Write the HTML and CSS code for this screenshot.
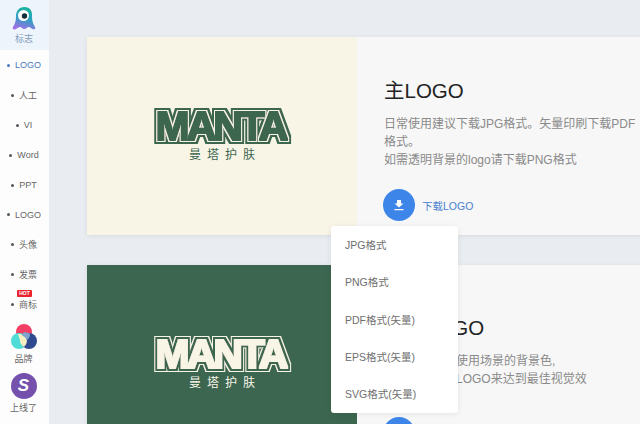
FILE: index.html
```html
<!DOCTYPE html>
<html lang="en">
<head>
    <meta charset="UTF-8">
    <title>Manta</title>
    <link rel="stylesheet" href="styles.css">
</head>
<body>
    <!-- blocky outline round the wordmark, one filter per card colour -->
    <svg class="filter-defs" width="0" height="0">
        <filter id="outline-light" x="-10%" y="-30%" width="120%" height="160%">
            <feMorphology in="SourceAlpha" operator="dilate" radius="3.5" result="a"/>
            <feFlood flood-color="#3c6650"/>
            <feComposite in2="a" operator="in" result="edge"/>
            <feMorphology in="SourceAlpha" operator="dilate" radius="2.3" result="b"/>
            <feFlood flood-color="#f8f5e7"/>
            <feComposite in2="b" operator="in" result="ring"/>
            <feMorphology in="SourceGraphic" operator="dilate" radius="0.8" result="fill"/>
            <feMerge>
                <feMergeNode in="edge"/>
                <feMergeNode in="ring"/>
                <feMergeNode in="fill"/>
            </feMerge>
        </filter>
        <filter id="outline-dark" x="-10%" y="-30%" width="120%" height="160%">
            <feMorphology in="SourceAlpha" operator="dilate" radius="3.5" result="a"/>
            <feFlood flood-color="#f8f5e7"/>
            <feComposite in2="a" operator="in" result="edge"/>
            <feMorphology in="SourceAlpha" operator="dilate" radius="2.6" result="b"/>
            <feFlood flood-color="#3c6650"/>
            <feComposite in2="b" operator="in" result="ring"/>
            <feMorphology in="SourceGraphic" operator="dilate" radius="0.8" result="fill"/>
            <feMerge>
                <feMergeNode in="edge"/>
                <feMergeNode in="ring"/>
                <feMergeNode in="fill"/>
            </feMerge>
        </filter>
    </svg>

    <div class="sidebar">
        <div class="side-head">
            <svg class="mascot" width="24" height="25" viewBox="0 0 24 25">
                <defs>
                    <linearGradient id="mascot-fill" x1="0.6" y1="0" x2="0.3" y2="1">
                        <stop offset="0" stop-color="#17b59c"/>
                        <stop offset="0.5" stop-color="#2f9fc4"/>
                        <stop offset="1" stop-color="#a76be8"/>
                    </linearGradient>
                </defs>
                <path d="M12.500 0C7 0 4 4 4 9.500c0 4.500-1 7.500-3 10.500-1 1.500.5 3 2.500 2.200 2-.7 3-2.200 4.500-2.200 1.500 0 2.200 2 4.200 2s3-2 4.500-2c1.400 0 2.400 1.500 4.300 2.200 1.700.600 2.800-.800 2-2.200-2-3-3-6-3-10.500C20.500 4 18 0 12.500 0z" fill="url(#mascot-fill)"/>
                <circle cx="11.500" cy="8.500" r="5.500" fill="#fff"/>
                <circle cx="12.500" cy="9" r="2.700" fill="#13303a"/>
            </svg>
            <span>标志</span>
        </div>
        <ul class="side-nav">
            <li class="active"><i></i>LOGO</li>
            <li><i></i>人工</li>
            <li><i></i>VI</li>
            <li><i></i>Word</li>
            <li><i></i>PPT</li>
            <li><i></i>LOGO</li>
            <li><i></i>头像</li>
            <li><i></i>发票</li>
            <li><b class="hot">HOT</b><i></i>商标</li>
        </ul>
        <div class="side-foot">
            <svg width="26" height="26" viewBox="0 0 26 26">
                <circle cx="13" cy="8" r="8" fill="#f23f63"/>
                <circle cx="8" cy="17" r="8" fill="#4fdcd6"/>
                <circle cx="18" cy="17" r="8" fill="#2f4a8f"/>
                <path d="M7 10a8 8 0 0 1 9 7 8 8 0 0 1-3 6 8 8 0 0 1-4-6.500z" fill="#f6efc4"/>
                <path d="M13 8l6 1.500a8 8 0 0 1-3 6.500 8 8 0 0 0-5-4.500z" fill="#7fa6cf"/>
            </svg>
            <span>品牌</span>
            <div class="s-badge">S</div>
            <span>上线了</span>
        </div>
    </div>

    <div class="main">
        <div class="card">
            <div class="card-logo">
                <div class="wordmark">MANTA</div>
                <div class="wordmark-cn">曼塔护肤</div>
            </div>
            <div class="card-info">
                <div class="info-text">
                    <h2>主LOGO</h2>
                    <p>日常使用建议下载JPG格式。矢量印刷下载PDF<br>格式。<br>如需透明背景的logo请下载PNG格式</p>
                </div>
                <div class="download">
                    <span class="download-btn">
                        <svg width="12" height="12" viewBox="0 0 12 12"><path d="M4 1h4v3.500h2.500L6 8.500 1.500 4.500H4zM1.500 10h9v1.300h-9z" fill="#fff"/></svg>
                    </span>
                    <span class="download-label">下载LOGO</span>
                    <ul class="dropdown">
                        <li>JPG格式</li>
                        <li>PNG格式</li>
                        <li>PDF格式(矢量)</li>
                        <li>EPS格式(矢量)</li>
                        <li>SVG格式(矢量)</li>
                    </ul>
                </div>
            </div>
        </div>

        <div class="card">
            <div class="card-logo dark">
                <div class="wordmark">MANTA</div>
                <div class="wordmark-cn">曼塔护肤</div>
            </div>
            <div class="card-info">
                <div class="info-text">
                    <h2>反白LOGO</h2>
                    <p>可以根据不同使用场景的背景色,<br>选择合适颜色LOGO来达到最佳视觉效</p>
                </div>
                <div class="download">
                    <span class="download-btn"></span>
                </div>
            </div>
        </div>
    </div>
</body>
</html>
```

FILE: styles.css
```css
html, body {
    margin: 0;
    height: 100%;
}

body {
    display: flex;
    height: 424px;
    overflow: hidden;
    background-color: #e9edf2;
    font-family: "Liberation Sans", "Noto Sans CJK SC", sans-serif;
}

ul {
    list-style: none;
    margin: 0;
    padding: 0;
}

.filter-defs {
    flex-shrink: 0;
}

/* sidebar */
.sidebar {
    width: 49px;
    flex-shrink: 0;
    box-sizing: border-box;
    background-color: #fdfdfd;
    font-size: 9px;
    color: #666;
}

.side-head {
    height: 50px;
    box-sizing: border-box;
    padding: 7px 1px 0 0;
    background-color: #eef4fb;
    display: flex;
    flex-direction: column;
    align-items: center;
    color: #7d98b8;
}

.side-head span {
    line-height: 13px;
    margin-top: 1px;
}

.side-nav {
    padding-right: 1px;
}

.side-nav li {
    position: relative;
    height: 29.9px;
    padding-top: 1px;
    box-sizing: border-box;
    display: flex;
    align-items: center;
    justify-content: center;
    gap: 5px;
}

.side-nav i {
    width: 3px;
    height: 3px;
    border-radius: 50%;
    background-color: #555;
}

.side-nav .active {
    color: #4a78bd;
}

.side-nav .active i {
    background-color: #4a78bd;
}

.hot {
    position: absolute;
    top: 1px;
    left: 17px;
    width: 15px;
    height: 7px;
    border-radius: 1px;
    background-color: #e8252f;
    color: #fff;
    font-size: 5px;
    line-height: 7px;
    text-align: center;
}

.side-foot {
    padding: 5px 2px 0 0;
    display: flex;
    flex-direction: column;
    align-items: center;
}

.side-foot span {
    margin-top: 3px;
    line-height: 12px;
}

.s-badge {
    width: 26px;
    height: 26px;
    margin-top: 8px;
    border-radius: 50%;
    background-color: #7650ad;
    color: #fff;
    font: italic bold 17px/26px "Liberation Sans", sans-serif;
    text-align: center;
}

/* main area */
.main {
    flex: 1;
    min-width: 0;
    padding: 37px 0 0 38px;
}

.card {
    display: flex;
    width: 560px;
    height: 198px;
    margin-bottom: 30px;
    background-color: #f7f7f7;
    box-shadow: 0 1px 5px rgba(0, 0, 0, 0.08);
    border-radius: 2px 0 0 2px;
}

.card-logo {
    width: 270px;
    flex-shrink: 0;
    box-sizing: border-box;
    padding-bottom: 2px;
    display: flex;
    flex-direction: column;
    align-items: center;
    justify-content: center;
    background-color: #f8f5e7;
    color: #3c6650;
}

.card-logo.dark {
    background-color: #3c6650;
    color: #f8f5e7;
}

.wordmark {
    font-size: 41px;
    font-weight: bold;
    line-height: 37px;
    letter-spacing: -3px;
    padding-right: 3px;
    filter: url(#outline-light);
}

.dark .wordmark {
    filter: url(#outline-dark);
}

.wordmark-cn {
    margin-top: 2px;
    font-size: 12px;
    line-height: 16px;
    letter-spacing: 6px;
    padding-left: 6px;
}

.card-info {
    flex: 1;
    padding: 41px 0 0 27px;
}

.info-text {
    height: 91px;
    display: flex;
    flex-direction: column;
    justify-content: center;
}

h2 {
    margin: 0 0 11px;
    font-size: 20.5px;
    font-weight: normal;
    line-height: 26px;
    color: #222;
}

p {
    margin: 0;
    font-size: 12px;
    line-height: 18px;
    color: #8a8a8a;
}

.download {
    position: relative;
    display: flex;
    align-items: center;
    gap: 7px;
    margin-top: 20px;
    margin-left: -1px;
}

.download-btn {
    width: 32px;
    height: 32px;
    border-radius: 50%;
    background-color: #3d85e8;
    display: flex;
    align-items: center;
    justify-content: center;
}

.download-label {
    font-size: 10.5px;
    color: #4a7fd0;
}

.dropdown {
    position: absolute;
    top: 37px;
    left: -52px;
    z-index: 10;
    width: 127px;
    padding-top: 1px;
    background-color: #fff;
    border-radius: 3px;
    box-shadow: 0 1px 6px rgba(0, 0, 0, 0.08);
}

.dropdown li {
    height: 37.3px;
    line-height: 37.3px;
    padding-left: 14px;
    font-size: 10.5px;
    color: #6e6e6e;
}
```
